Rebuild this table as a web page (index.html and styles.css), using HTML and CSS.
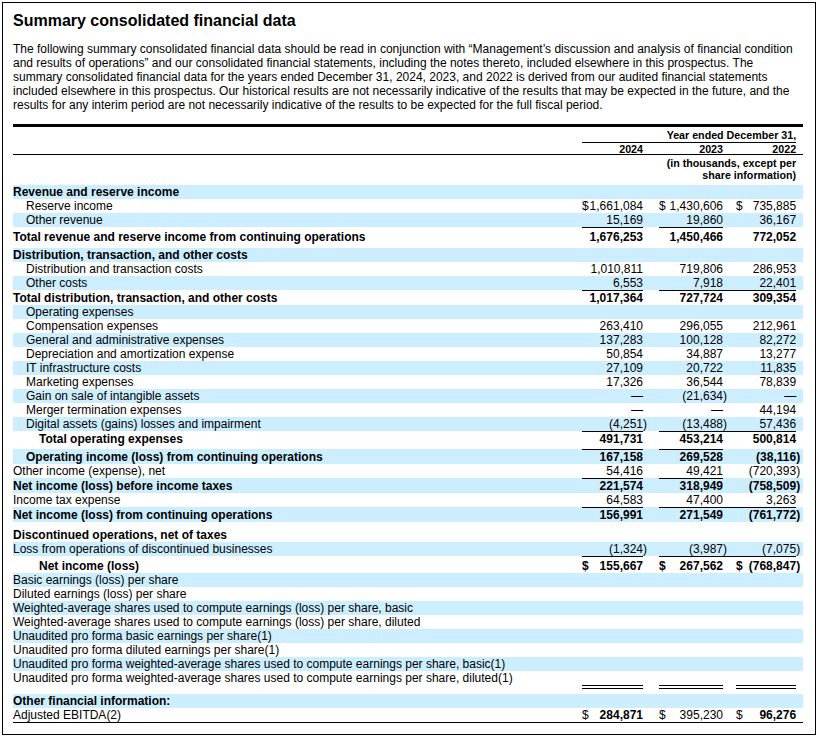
FILE: index.html
```html
<!DOCTYPE html>
<html lang="en">
<head>
<meta charset="utf-8">
<title>Summary consolidated financial data</title>
<link rel="stylesheet" href="styles.css">
</head>
<body>
<div class="doc">
<h1 class="title">Summary consolidated financial data</h1>
<p class="intro">The following summary consolidated financial data should be read in conjunction with “Management’s discussion and analysis of financial condition<br>and results of operations” and our consolidated financial statements, including the notes thereto, included elsewhere in this prospectus. The<br>summary consolidated financial data for the years ended December 31, 2024, 2023, and 2022 is derived from our audited financial statements<br>included elsewhere in this prospectus. Our historical results are not necessarily indicative of the results that may be expected in the future, and the<br>results for any interim period are not necessarily indicative of the results to be expected for the full fiscal period.</p>
<table class="fin">
<colgroup>
<col class="c-l"><col class="c-d1"><col class="c-n1"><col class="c-p"><col class="c-g1"><col class="c-d2"><col class="c-n2"><col class="c-p"><col class="c-g2"><col class="c-d3"><col class="c-n3"><col class="c-p"><col class="c-e">
</colgroup>
<thead>
<tr class="h1"><td></td><td colspan="10" class="hd-span">Year ended December 31,</td><td colspan="2"></td></tr>
<tr class="h2"><td></td><td colspan="2" class="yr">2024</td><td></td><td></td><td colspan="2" class="yr">2023</td><td></td><td></td><td colspan="2" class="yr">2022</td><td></td><td></td></tr>
<tr class="h3"><td colspan="5"></td><td colspan="6" class="units">(in thousands, except per<br>share information)</td><td colspan="2"></td></tr>
</thead>
<tbody>
<tr class="band b"><td class="l">Revenue and reserve income</td><td colspan="12"></td></tr>
<tr><td class="l i1">Reserve income</td><td class="d">$</td><td class="n">1,661,084</td><td></td><td></td><td class="d">$</td><td class="n">1,430,606</td><td></td><td></td><td class="d">$</td><td class="n">735,885</td><td></td><td></td></tr>
<tr class="band"><td class="l i1">Other revenue</td><td></td><td class="n">15,169</td><td></td><td></td><td></td><td class="n">19,860</td><td></td><td></td><td></td><td class="n">36,167</td><td></td><td></td></tr>
<tr class="b pt2 pb4"><td class="l">Total revenue and reserve income from continuing operations</td><td class="t"></td><td class="n t">1,676,253</td><td></td><td></td><td class="t"></td><td class="n t">1,450,466</td><td></td><td></td><td></td><td class="n">772,052</td><td></td><td></td></tr>
<tr class="band b"><td class="l">Distribution, transaction, and other costs</td><td colspan="12"></td></tr>
<tr><td class="l i1">Distribution and transaction costs</td><td></td><td class="n">1,010,811</td><td></td><td></td><td></td><td class="n">719,806</td><td></td><td></td><td></td><td class="n">286,953</td><td></td><td></td></tr>
<tr class="band"><td class="l i1">Other costs</td><td></td><td class="n">6,553</td><td></td><td></td><td></td><td class="n">7,918</td><td></td><td></td><td></td><td class="n">22,401</td><td></td><td></td></tr>
<tr class="b"><td class="l">Total distribution, transaction, and other costs</td><td class="t"></td><td class="n t">1,017,364</td><td></td><td></td><td class="t"></td><td class="n t">727,724</td><td class="t"></td><td class="t"></td><td class="t"></td><td class="n t">309,354</td><td></td><td></td></tr>
<tr class="band"><td class="l i1">Operating expenses</td><td colspan="12"></td></tr>
<tr><td class="l i1">Compensation expenses</td><td></td><td class="n">263,410</td><td></td><td></td><td></td><td class="n">296,055</td><td></td><td></td><td></td><td class="n">212,961</td><td></td><td></td></tr>
<tr class="band"><td class="l i1">General and administrative expenses</td><td></td><td class="n">137,283</td><td></td><td></td><td></td><td class="n">100,128</td><td></td><td></td><td></td><td class="n">82,272</td><td></td><td></td></tr>
<tr><td class="l i1">Depreciation and amortization expense</td><td></td><td class="n">50,854</td><td></td><td></td><td></td><td class="n">34,887</td><td></td><td></td><td></td><td class="n">13,277</td><td></td><td></td></tr>
<tr class="band"><td class="l i1">IT infrastructure costs</td><td></td><td class="n">27,109</td><td></td><td></td><td></td><td class="n">20,722</td><td></td><td></td><td></td><td class="n">11,835</td><td></td><td></td></tr>
<tr><td class="l i1">Marketing expenses</td><td></td><td class="n">17,326</td><td></td><td></td><td></td><td class="n">36,544</td><td></td><td></td><td></td><td class="n">78,839</td><td></td><td></td></tr>
<tr class="band"><td class="l i1">Gain on sale of intangible assets</td><td></td><td class="n">—</td><td></td><td></td><td></td><td class="n">(21,634</td><td class="p">)</td><td></td><td></td><td class="n">—</td><td></td><td></td></tr>
<tr><td class="l i1">Merger termination expenses</td><td></td><td class="n">—</td><td></td><td></td><td></td><td class="n">—</td><td></td><td></td><td></td><td class="n">44,194</td><td></td><td></td></tr>
<tr class="band"><td class="l i1">Digital assets (gains) losses and impairment</td><td></td><td class="n">(4,251</td><td class="p">)</td><td></td><td></td><td class="n">(13,488</td><td class="p">)</td><td></td><td></td><td class="n">57,436</td><td></td><td></td></tr>
<tr class="b pb3"><td class="l i2">Total operating expenses</td><td class="t"></td><td class="n t">491,731</td><td></td><td></td><td class="t"></td><td class="n t">453,214</td><td class="t"></td><td class="t"></td><td class="t"></td><td class="n t">500,814</td><td></td><td></td></tr>
<tr class="band b"><td class="l i1">Operating income (loss) from continuing operations</td><td class="t"></td><td class="n t">167,158</td><td></td><td></td><td class="t"></td><td class="n t">269,528</td><td></td><td></td><td></td><td class="n">(38,116</td><td class="p">)</td><td></td></tr>
<tr><td class="l">Other income (expense), net</td><td></td><td class="n">54,416</td><td></td><td></td><td></td><td class="n">49,421</td><td></td><td></td><td></td><td class="n">(720,393</td><td class="p">)</td><td></td></tr>
<tr class="band b"><td class="l">Net income (loss) before income taxes</td><td class="t"></td><td class="n t">221,574</td><td></td><td></td><td class="t"></td><td class="n t">318,949</td><td></td><td></td><td></td><td class="n">(758,509</td><td class="p">)</td><td></td></tr>
<tr><td class="l">Income tax expense</td><td></td><td class="n">64,583</td><td></td><td></td><td></td><td class="n">47,400</td><td></td><td></td><td></td><td class="n">3,263</td><td></td><td></td></tr>
<tr class="band b"><td class="l">Net income (loss) from continuing operations</td><td class="t"></td><td class="n t">156,991</td><td></td><td></td><td class="t"></td><td class="n t">271,549</td><td class="t"></td><td class="t"></td><td class="t"></td><td class="n t">(761,772</td><td class="p">)</td><td></td></tr>
<tr class="gap"><td colspan="13"></td></tr>
<tr class="b"><td class="l">Discontinued operations, net of taxes</td><td colspan="12"></td></tr>
<tr class="band"><td class="l">Loss from operations of discontinued businesses</td><td></td><td class="n">(1,324</td><td class="p">)</td><td></td><td></td><td class="n">(3,987</td><td class="p">)</td><td></td><td></td><td class="n">(7,075</td><td class="p">)</td><td></td></tr>
<tr class="b pt2"><td class="l i2">Net income (loss)</td><td class="d t">$</td><td class="n t">155,667</td><td></td><td></td><td class="d t">$</td><td class="n t">267,562</td><td class="t"></td><td class="t"></td><td class="d t">$</td><td class="n t">(768,847</td><td class="p">)</td><td></td></tr>
<tr class="band"><td class="l">Basic earnings (loss) per share</td><td colspan="12"></td></tr>
<tr><td class="l">Diluted earnings (loss) per share</td><td colspan="12"></td></tr>
<tr class="band"><td class="l">Weighted-average shares used to compute earnings (loss) per share, basic</td><td colspan="12"></td></tr>
<tr><td class="l">Weighted-average shares used to compute earnings (loss) per share, diluted</td><td colspan="12"></td></tr>
<tr class="band"><td class="l">Unaudited pro forma basic earnings per share(1)</td><td colspan="12"></td></tr>
<tr><td class="l">Unaudited pro forma diluted earnings per share(1)</td><td colspan="12"></td></tr>
<tr class="band"><td class="l">Unaudited pro forma weighted-average shares used to compute earnings per share, basic(1)</td><td colspan="12"></td></tr>
<tr><td class="l">Unaudited pro forma weighted-average shares used to compute earnings per share, diluted(1)</td><td colspan="12"></td></tr>
<tr class="dbl"><td></td><td class="x" colspan="2"></td><td colspan="2"></td><td class="x" colspan="2"></td><td colspan="2"></td><td class="x" colspan="2"></td><td colspan="2"></td></tr>
<tr class="band b"><td class="l">Other financial information:</td><td colspan="12"></td></tr>
<tr class="last"><td class="l">Adjusted EBITDA(2)</td><td class="d">$</td><td class="n strong">284,871</td><td></td><td></td><td class="d">$</td><td class="n">395,230</td><td></td><td></td><td class="d">$</td><td class="n strong">96,276</td><td></td><td></td></tr>
</tbody>
</table>
</div>
</body>
</html>
```

FILE: styles.css
```css
* { box-sizing: border-box; }
html, body { margin: 0; padding: 0; background: #fff; }
body { font-family: "Liberation Sans", Arial, sans-serif; color: #000; }

.doc {
  margin: 2px;
  width: 814px;
  height: 733px;
  border: 1px solid #000;
  padding: 9px 12px 0 10px;
}

.title {
  margin: 0;
  font-size: 16px;
  line-height: 18px;
  font-weight: 700;
}

.intro {
  margin: 12px 0 0;
  font-size: 12px;
  line-height: 14px;
  white-space: nowrap;
}

.fin {
  margin-top: 12px;
  width: 790px;
  table-layout: fixed;
  border-collapse: separate;
  border-spacing: 0;
  border-top: 3px solid #000;
  font-size: 12px;
  line-height: 14px;
}

.c-l { width: 569px; }
.c-d1 { width: 7px; }
.c-n1 { width: 54px; }
.c-p { width: 5px; }
.c-g1 { width: 11px; }
.c-d2 { width: 8px; }
.c-n2 { width: 56px; }
.c-g2 { width: 8px; }
.c-d3 { width: 9px; }
.c-n3 { width: 51px; }
.c-e { width: 2px; }

.fin td {
  padding: 0;
  vertical-align: bottom;
  white-space: nowrap;
}

/* header */
.fin thead td { font-size: 10.7px; font-weight: 700; }
.h1 td { padding-top: 1px; line-height: 14px; }
.hd-span { text-align: right; border-bottom: 1px solid #000; }
.h2 td { padding-top: 1px; line-height: 10px; border-bottom: 1px solid #000; }
.yr { text-align: right; }
.h3 td { padding: 2px 0 4px; line-height: 12px; }
.units { text-align: right; }

/* body */
.band { background: #cceeff; }
.b td { font-weight: 700; }
.fin td.i1 { padding-left: 13px; }
.fin td.i2 { padding-left: 26px; }
.n { text-align: right; }
.d, .p { text-align: left; }
.fin td.t { border-top: 1px solid #000; }
.fin .pt2 td { padding-top: 2px; }
.fin .pb4 td { padding-bottom: 4px; }
.fin .pb3 td { padding-bottom: 3px; }
.strong { font-weight: 700; }

.gap td { height: 6px; line-height: 0; font-size: 0; }
.dbl td { box-sizing: content-box; height: 5px; line-height: 0; font-size: 0; }
.fin td.x { border-top: 4px double #000; }
.last td { border-bottom: 1px solid #000; }
```
